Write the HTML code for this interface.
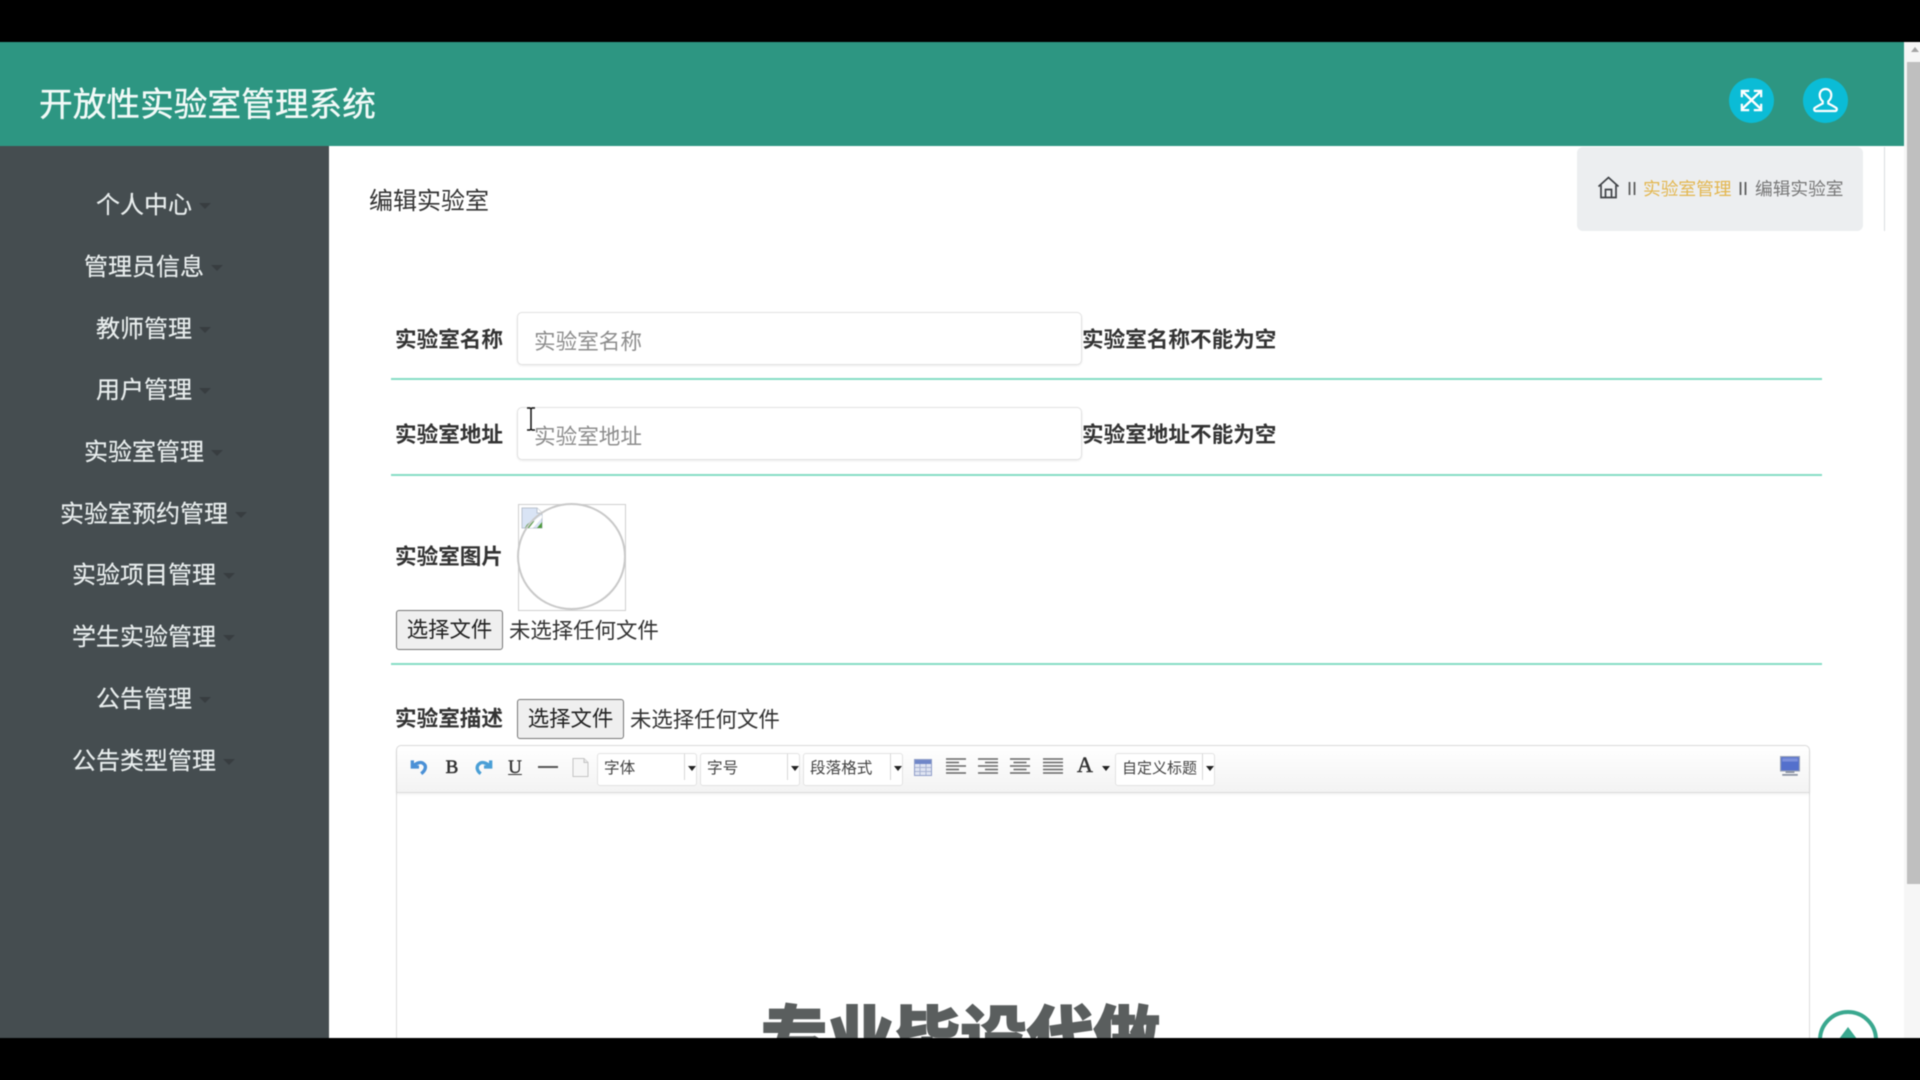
<!DOCTYPE html>
<html lang="zh-CN">
<head>
<meta charset="utf-8">
<title>开放性实验室管理系统</title>
<style>
*{box-sizing:border-box;margin:0;padding:0}
html,body{width:1920px;height:1080px;overflow:hidden;background:#000}
body{position:relative;font-family:"Liberation Sans","Noto Sans CJK SC",sans-serif;color:#333}
#w{position:absolute;left:0;top:0;width:1920px;height:1080px;overflow:hidden}
#f{position:absolute;left:-6px;top:-6px;width:1932px;height:1092px;background:#fff;filter:blur(.45px)}
#i{position:absolute;left:6px;top:6px;width:1920px;height:1080px}
.a{position:absolute;white-space:nowrap}
.t{position:absolute;white-space:nowrap;height:40px;line-height:40px}
.nav{position:absolute;left:0;width:288px;text-align:center;height:40px;line-height:40px;font-size:24px;color:#e9eeee;white-space:nowrap;-webkit-text-stroke:.2px #e9eeee}
.nav i{position:absolute;top:17px;border:6px solid transparent;border-top:6px solid #383d40;border-bottom:0}
.lb{font-size:21.6px;font-weight:700;color:#333}
.inp{position:absolute;left:517px;width:565px;height:53px;border:1px solid #e2e2e2;border-radius:5px;background:#fff;box-shadow:0 1px 2px rgba(0,0,0,.08)}
.ph{font-size:21.6px;color:#8d8d8d}
.ln{position:absolute;left:391px;width:1431px;height:2px;background:#86dcc5}
.btn{position:absolute;width:107px;height:40px;line-height:39px;text-align:center;background:#efefef;border:1px solid #767676;border-radius:3px;font-size:21.4px;color:#222;white-space:nowrap}
.ft{font-size:21.4px;color:#333}
.sel{position:absolute;top:753px;height:33px;width:100px;background:#fff;border:1px solid #e2e2e2;border-radius:3px;font-size:15.6px;line-height:29px;color:#444;padding-left:6px;white-space:nowrap;overflow:hidden}
.sel b{position:absolute;right:11px;top:0;height:26px;width:1px;background:#d8d8d8}
.sel u{position:absolute;right:0;top:12px;border:4px solid transparent;border-top:5px solid #222;border-bottom:0}
svg{position:absolute;display:block}
</style>
</head>
<body>
<div id="w"><div id="f"><div id="i">
<!-- header -->
<div class="a" style="left:-6px;top:42px;width:1910px;height:104px;background:#2d9682"></div>
<div class="a" style="left:39px;top:80px;height:50px;line-height:50px;font-size:33.7px;color:#f2faf8;-webkit-text-stroke:.35px #f2faf8">开放性实验室管理系统</div>
<div class="a" style="left:1729px;top:78px;width:45px;height:45px;border-radius:50%;background:#0bbcd6"></div>
<div class="a" style="left:1803px;top:78px;width:45px;height:45px;border-radius:50%;background:#0bbcd6"></div>
<svg style="left:1740px;top:89px" width="23" height="23" viewBox="0 0 25 25" fill="none" stroke="#fff" stroke-width="2.6">
<path d="M3 3l19 18M22 3L3 21"/>
<path d="M2 9V2h8M23 9V2h-8M2 16v7h8M23 16v7h-8" stroke-width="2.4"/>
</svg>
<svg style="left:1812px;top:87px" width="27" height="27" viewBox="0 0 27 27" fill="none" stroke="#fff" stroke-width="2.2">
<path d="M13.5 2c-3.6 0-5.8 2.700-5.800 6 0 2.600 1.200 4.800 3 6.300v2.200c-2.500 1.300-6 2.800-8 4.500-.9.800-.5 3 .8 3h20c1.300 0 1.700-2.200.8-3-2-1.700-5.500-3.200-8-4.500v-2.200c1.800-1.500 3-3.700 3-6.300 0-3.300-2.200-6-5.800-6z"/>
</svg>

<!-- sidebar -->
<div class="a" style="left:-6px;top:146px;width:335px;height:892px;background:#454d50"></div>
<div class="nav" style="top:186px">个人中心<i style="left:199px"></i></div>
<div class="nav" style="top:248px">管理员信息<i style="left:211px"></i></div>
<div class="nav" style="top:310px">教师管理<i style="left:199px"></i></div>
<div class="nav" style="top:371px">用户管理<i style="left:199px"></i></div>
<div class="nav" style="top:433px">实验室管理<i style="left:211px"></i></div>
<div class="nav" style="top:495px">实验室预约管理<i style="left:235px"></i></div>
<div class="nav" style="top:556px">实验项目管理<i style="left:223px"></i></div>
<div class="nav" style="top:618px">学生实验管理<i style="left:223px"></i></div>
<div class="nav" style="top:680px">公告管理<i style="left:199px"></i></div>
<div class="nav" style="top:742px">公告类型管理<i style="left:223px"></i></div>

<!-- title & breadcrumb -->
<div class="t" style="left:369px;top:182px;font-size:24px;color:#333">编辑实验室</div>
<div class="a" style="left:1577px;top:147px;width:286px;height:84px;background:#eceef0;border-radius:6px"></div>
<div class="a" style="left:1884px;top:147px;width:1px;height:84px;background:#d9dce0"></div>
<svg style="left:1597px;top:176px" width="23" height="23" viewBox="0 0 23 23" fill="none" stroke="#3f4246" stroke-width="1.700">
<path d="M1.500 10.500L11.500 1.500l10 9"/>
<path d="M4 9v12.500h15V9"/>
<path d="M8.500 21.500v-8h6v8"/>
</svg>
<div class="t" style="left:1627px;top:169px;font-size:18px;color:#555">II</div>
<div class="t" style="left:1643px;top:169px;font-size:17.700px;color:#e3b64e">实验室管理</div>
<div class="t" style="left:1738px;top:169px;font-size:18px;color:#555">II</div>
<div class="t" style="left:1755px;top:169px;font-size:17.700px;color:#777">编辑实验室</div>

<!-- row 1 -->
<div class="t lb" style="left:395px;top:320px">实验室名称</div>
<div class="inp" style="top:312px"></div>
<div class="t ph" style="left:534px;top:322px">实验室名称</div>
<div class="t lb" style="left:1082px;top:320px">实验室名称不能为空</div>
<div class="ln" style="top:378px"></div>

<!-- row 2 -->
<div class="t lb" style="left:395px;top:415px">实验室地址</div>
<div class="inp" style="top:407px"></div>
<div class="t ph" style="left:534px;top:417px">实验室地址</div>
<div class="t lb" style="left:1082px;top:415px">实验室地址不能为空</div>
<div class="ln" style="top:474px"></div>
<svg style="left:525px;top:407px" width="12" height="24" viewBox="0 0 12 24" fill="none" stroke="#111" stroke-width="1.500">
<path d="M2 1h3l1 1 1-1h3M6 2v20M2 23h3l1-1 1 1h3"/>
</svg>

<!-- row 3 -->
<div class="t lb" style="left:395px;top:537px">实验室图片</div>
<div class="a" style="left:518px;top:504px;width:108px;height:107px;border:1px solid #cfcfcf"></div>
<svg style="left:520px;top:506px" width="24" height="24" viewBox="0 0 24 24">
<path d="M2 2h15l5 5v15H2z" fill="#d9e4f5" stroke="#b9c2cf" stroke-width="1"/>
<path d="M17 2v5h5" fill="#fff" stroke="#b9c2cf"/>
<path d="M5 22c2-5 6-7 11-7l-6 7z" fill="#4f9b3d"/>
<path d="M16 13l6-4v3l-9 10h-4z" fill="#fff"/>
<path d="M17 22l5-6v6z" fill="#4f9b3d"/>
</svg>
<div class="a" style="left:517px;top:503px;width:109px;height:107px;border:2px solid #c9c9c9;border-radius:50%"></div>
<div class="btn" style="left:396px;top:610px">选择文件</div>
<div class="t ft" style="left:509px;top:611px">未选择任何文件</div>
<div class="ln" style="top:663px"></div>

<!-- row 4 -->
<div class="t lb" style="left:395px;top:699px">实验室描述</div>
<div class="btn" style="left:517px;top:699px">选择文件</div>
<div class="t ft" style="left:630px;top:700px">未选择任何文件</div>

<!-- editor -->
<div class="a" style="left:396px;top:745px;width:1414px;height:293px;background:#fff;border:1px solid #dcdcdc;border-bottom:0;border-radius:5px 5px 0 0"></div>
<div class="a" style="left:397px;top:746px;width:1412px;height:47px;background:linear-gradient(#fff,#f3f3f3);border-bottom:1px solid #dcdcdc;border-radius:5px 5px 0 0;box-shadow:0 1px 3px rgba(0,0,0,.08)"></div>

<!-- toolbar icons -->
<svg style="left:409px;top:757px" width="20" height="20" viewBox="0 0 18 18" fill="none" stroke="#4a90d6" stroke-width="3">
<path d="M3 3v6h6"/><path d="M4 8c3-3 7-4 9-2 3 2 2 6-2 9"/>
</svg>
<div class="a" style="left:444px;top:754px;width:16px;height:28px;text-align:center;font:400 19px/28px 'Liberation Serif',serif;-webkit-text-stroke:.6px #333;color:#333">B</div>
<svg style="left:474px;top:757px" width="20" height="20" viewBox="0 0 18 18" fill="none" stroke="#4a9fd6" stroke-width="3">
<path d="M15 3v6H9"/><path d="M14 8c-3-3-7-4-9-2-3 2-3 6 1 9"/>
</svg>
<div class="a" style="left:507px;top:754px;width:16px;height:28px;text-align:center;font:400 19px/28px 'Liberation Serif',serif;-webkit-text-stroke:.4px #333;color:#333;text-decoration:underline">U</div>
<div class="a" style="left:538px;top:766px;width:20px;height:2px;background:#555"></div>
<svg style="left:572px;top:758px" width="17" height="19" viewBox="0 0 17 19">
<path d="M1 .5h11l4 4v14H1z" fill="#f6f6f6" stroke="#c4c4c4"/><path d="M12 .5v4h4" fill="#e8e8e8" stroke="#c4c4c4"/>
</svg>
<div class="sel" style="left:597px">字体<b></b><u></u></div>
<div class="sel" style="left:700px">字号<b></b><u></u></div>
<div class="sel" style="left:803px">段落格式<b></b><u></u></div>
<svg style="left:914px;top:759px" width="18" height="17" viewBox="0 0 18 17">
<rect x=".5" y=".5" width="17" height="16" fill="#dfe4f2" stroke="#8f9dc8"/>
<rect x="1" y="1" width="16" height="4" fill="#6f86c8"/>
<path d="M6 5v11M12 5v11M1 8.500h16M1 12.500h16" stroke="#a9b4d4" fill="none"/>
</svg>
<svg style="left:946px;top:758px" width="20" height="16" viewBox="0 0 20 16" stroke="#666" stroke-width="1.400">
<path d="M0 1h20M0 4.500h13M0 8h20M0 11.500h13M0 15h20"/>
</svg>
<svg style="left:978px;top:758px" width="20" height="16" viewBox="0 0 20 16" stroke="#666" stroke-width="1.400">
<path d="M0 1h20M7 4.500h13M0 8h20M7 11.500h13M0 15h20"/>
</svg>
<svg style="left:1010px;top:758px" width="20" height="16" viewBox="0 0 20 16" stroke="#666" stroke-width="1.400">
<path d="M0 1h20M3.500 4.500h13M0 8h20M3.500 11.500h13M0 15h20"/>
</svg>
<svg style="left:1043px;top:758px" width="20" height="16" viewBox="0 0 20 16" stroke="#666" stroke-width="1.400">
<path d="M0 1h20M0 4.500h20M0 8h20M0 11.500h20M0 15h20"/>
</svg>
<div class="a" style="left:1076px;top:751px;width:18px;height:28px;text-align:center;font:400 22px/28px 'Liberation Serif',serif;-webkit-text-stroke:.5px #333;color:#333">A</div>
<div class="a" style="left:1102px;top:766px;border:4px solid transparent;border-top:5px solid #222;border-bottom:0"></div>
<div class="sel" style="left:1115px;font-size:15px">自定义标题<b></b><u></u></div>
<svg style="left:1780px;top:756px" width="20" height="20" viewBox="0 0 18 18">
<rect x=".5" y=".5" width="17" height="13" fill="#5470cc" stroke="#9aa3b5"/>
<rect x="2" y="2" width="14" height="3" fill="#7c90dc"/>
<path d="M5 14.500h8M2 17h14" stroke="#8b93a3" stroke-width="1.500"/>
</svg>

<!-- editor content -->
<div class="a" style="left:761px;top:994px;height:90px;line-height:90px;font-size:66.5px;font-weight:900;color:#5a5e5e;-webkit-text-stroke:1.500px #5a5e5e">专业毕设代做</div>

<!-- back-to-top -->
<div class="a" style="left:1818px;top:1010px;width:60px;height:60px;border-radius:50%;border:4px solid #3aa88f;background:#fff"></div>
<div class="a" style="left:1836px;top:1027px;border:12px solid transparent;border-bottom:16px solid #3aa88f;border-top:0"></div>

<!-- scrollbar -->
<div class="a" style="left:1904px;top:42px;width:22px;height:996px;background:#f6f6f6"></div>
<div class="a" style="left:1907px;top:62px;width:19px;height:822px;background:#bfbfbf"></div>
<div class="a" style="left:1911px;top:47px;border:4px solid transparent;border-bottom:5px solid #a3a3a3;border-top:0"></div>

<!-- letterbox -->
<div class="a" style="left:-6px;top:-6px;width:1932px;height:48px;background:#000"></div>
<div class="a" style="left:-6px;top:1038px;width:1932px;height:48px;background:#000"></div>
</div></div></div>
</body>
</html>
